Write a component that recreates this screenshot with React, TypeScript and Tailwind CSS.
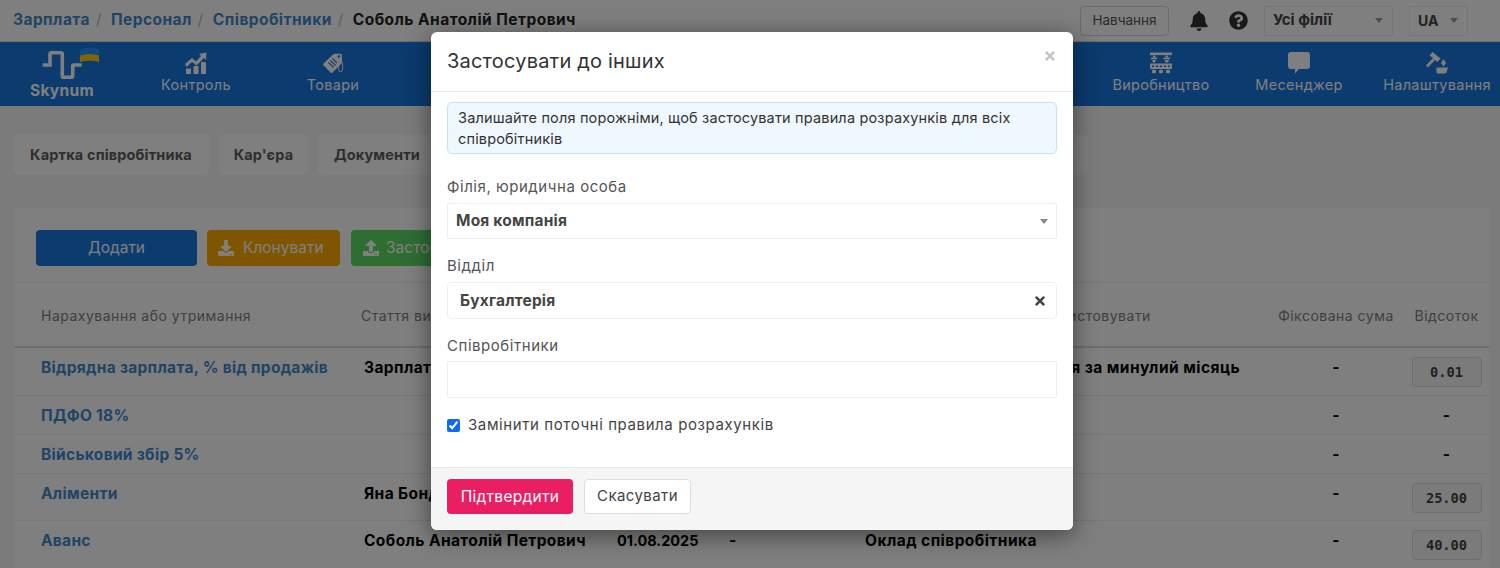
import React from 'react';
import { FaBell, FaQuestionCircle, FaDownload, FaUpload, FaTimes } from 'react-icons/fa';

const font = "font-['Inter','Liberation_Sans',sans-serif]";

const LogoMark = () => (
  <svg width="60" height="34" viewBox="0 0 60 34" className="block">
    <path
      d="M0.7 18 H8 V7 Q8 5.7 9.3 5.7 H19 Q20.3 5.7 20.3 7 V29 Q20.3 30.3 21.6 30.3 H29.4 Q30.7 30.3 30.7 29 V19.3 Q30.7 18 32 18 H39.7"
      fill="none"
      stroke="#fff"
      strokeWidth="3.6"
    />
    <path d="M38 2 Q48 -1 57 2 V8.5 Q48 5.5 38 8.5 Z" fill="#2090ff" />
    <path d="M38 8.5 Q48 5.5 57 8.5 V15 Q48 12 38 15 Z" fill="#ffcc00" />
  </svg>
);

const ChartIcon = () => (
  <svg width="22" height="22" viewBox="0 0 22 22" fill="#fff">
    <path d="M0 12 L7 6 L11 9.5 L16 4 L14 2 L21.5 0.5 L21 8 L19 6 L11.5 13.5 L7 10 L1.5 15 Z" />
    <rect x="1" y="16.5" width="5" height="5.5" rx="0.5" />
    <rect x="8.5" y="14" width="5" height="8" rx="0.5" />
    <rect x="16" y="10" width="5" height="12" rx="0.5" />
  </svg>
);

const TagIcon = () => (
  <svg width="21" height="21" viewBox="0 0 21 21">
    <path d="M0.5 10.5 L10 1.5 Q11 0.7 12.5 0.7 H17 Q19 0.7 19 2.7 V8.5 Q19 10 18 11 L9.5 19.5 Q8.5 20.5 7.5 19.5 L0.5 12.2 Q0 11.2 0.5 10.5 Z" fill="#fff" />
    <path d="M5.5 9.5 L10.5 14.5 M7.5 7.5 L12.5 12.5 M9.5 5.5 L14 10" stroke="#1676df" strokeWidth="1.1" />
    <circle cx="16" cy="3.7" r="1.4" fill="#1676df" />
    <path d="M16.5 4 Q20.5 9 19.5 17 Q18.5 20 16.5 18.5 Q15 17 15.5 13" fill="none" stroke="#fff" strokeWidth="0.9" />
  </svg>
);

const FactoryIcon = () => (
  <svg width="22" height="22" viewBox="0 0 22 22" fill="#fff">
    <rect x="0" y="0.5" width="22" height="2.6" />
    <rect x="3" y="3.5" width="2.5" height="2" />
    <rect x="15.5" y="3.5" width="2.5" height="2" />
    <path d="M1 5.5 H7 V7.2 H1 Z M2 8 H6 L5 10.5 H3 Z" />
    <path d="M13.5 5.5 H20 V7.2 H13.5 Z M14.5 8 H19 L18 10.5 H15.5 Z" />
    <path fillRule="evenodd" d="M1 11.5 H21 Q22 11.5 22 12.5 V16 Q22 17 21 17 H1 Q0 17 0 16 V12.5 Q0 11.5 1 11.5 Z M2 13.5 V15 H4 V13.5 Z M6 13.5 V15 H8 V13.5 Z M10 13.5 V15 H12 V13.5 Z M14 13.5 V15 H16 V13.5 Z M18 13.5 V15 H20 V13.5 Z" />
    <rect x="2" y="17.8" width="4" height="3.4" rx="1" />
    <rect x="9" y="17.8" width="4" height="3.4" rx="1" />
    <rect x="16" y="17.8" width="4" height="3.4" rx="1" />
  </svg>
);

const ChatIcon = () => (
  <svg width="22" height="22" viewBox="0 0 22 22" fill="#fff">
    <path d="M3 0 H19 Q22 0 22 3 V14 Q22 17 19 17 H11 L7 21.5 V17 H3 Q0 17 0 14 V3 Q0 0 3 0 Z" />
  </svg>
);

const HammerIcon = () => (
  <svg width="22" height="22" viewBox="0 0 22 22" fill="#fff">
    <path d="M6.5 0 L14.5 6.5 L11.5 10 L9 8 L2 15.5 L0 13.5 L7 6 L3.5 3.5 Z" />
    <path d="M17.5 7 L20 11 L17.5 14.5 L15 11 Z" />
    <path d="M10.5 15.5 H22 L20.5 20.5 Q20 21.5 19 21.5 H12 Q10.5 21.5 10.5 20 Z" />
  </svg>
);

const NavItem: React.FC<{ label: string; width: string; children: React.ReactNode }> = ({ label, width, children }) => (
  <div className={`${width} h-full flex flex-col items-center pt-[10px] text-white`}>
    <div className="h-[22px] flex items-center">{children}</div>
    <span className="text-[14.5px] leading-[20px] mt-[1px] tracking-[0.3px] whitespace-nowrap">{label}</span>
  </div>
);

const rows = [
  { name: 'Відрядна зарплата, % від продажів', item: 'Зарплата менеджерів', date: '', dash: '', base: 'Виручка від замовлення за минулий місяць', basePad: 'pl-[24px]', pct: '0.01', h: 'h-[48px]' },
  { name: 'ПДФО 18%', item: '', date: '', dash: '', base: '', basePad: 'pl-[10px]', pct: '-', h: 'h-[39px]' },
  { name: 'Військовий збір 5%', item: '', date: '', dash: '', base: '', basePad: 'pl-[10px]', pct: '-', h: 'h-[39px]' },
  { name: 'Аліменти', item: 'Яна Бонда', date: '', dash: '', base: '', basePad: 'pl-[10px]', pct: '25.00', h: 'h-[47px]' },
  { name: 'Аванс', item: 'Соболь Анатолій Петрович', date: '01.08.2025', dash: '-', base: 'Оклад співробітника', basePad: 'pl-[10px]', pct: '40.00', h: 'h-[48px]' },
];

const gridCols = 'grid-cols-[340px_253px_112px_136px_413px_136px_85px]';

export default function App() {
  return (
    <div className={`${font} relative h-[568px] w-[1500px] overflow-hidden bg-[#f6f6f6]`}>
      {/* Page behind the dialog */}
      <header className="h-[42px] bg-white border-b border-[#ddd] flex items-center pl-[13px] pr-[32px]">
        <nav className="flex items-center gap-[6px] text-[15.5px] font-bold tracking-[0.45px] -mt-[1px]">
          <a className="text-[#3f88cc]">Зарплата</a>
          <span className="text-[#bbb] font-normal">/</span>
          <a className="text-[#3f88cc] ml-[3px]">Персонал</a>
          <span className="text-[#bbb] font-normal">/</span>
          <a className="text-[#3f88cc] ml-[3px]">Співробітники</a>
          <span className="text-[#bbb] font-normal">/</span>
          <span className="text-[#222] ml-[3px]">Соболь Анатолій Петрович</span>
        </nav>
        <div className="ml-auto flex items-center">
          <button className="w-[89px] h-[30px] border border-[#d8d8d8] rounded-[4px] text-[13.5px] text-[#555]">Навчання</button>
          <FaBell className="ml-[20px] text-[#333]" size={20} />
          <FaQuestionCircle className="ml-[20px] text-[#333]" size={19} />
          <div className="ml-[16px] w-[129px] h-[30px] border border-[#eee] flex items-center justify-between pl-[8px] pr-[9px] text-[15px] font-bold text-[#444]">
            Усі філії
            <span className="w-0 h-0 border-x-[4px] border-x-transparent border-t-[5px] border-t-[#999]" />
          </div>
          <div className="ml-[16px] w-[59px] h-[30px] border border-[#eee] flex items-center justify-between pl-[8px] pr-[9px] text-[14px] font-bold text-[#444]">
            UA
            <span className="w-0 h-0 border-x-[4px] border-x-transparent border-t-[5px] border-t-[#999]" />
          </div>
        </div>
      </header>

      <div className="h-[64px] bg-[#1676df] flex items-start">
        <div className="w-[127px] h-full flex flex-col items-start pl-[30px] pt-[5px]">
          <div className="ml-[12px]">
            <LogoMark />
          </div>
          <span className="text-[15.5px] font-bold text-white leading-[18px] mt-[1px] tracking-[0.3px]">Skynum</span>
        </div>
        <NavItem label="Контроль" width="w-[138px]"><ChartIcon /></NavItem>
        <NavItem label="Товари" width="w-[136px]"><TagIcon /></NavItem>
        <div className="flex-1" />
        <NavItem label="Виробництво" width="w-[126px]"><FactoryIcon /></NavItem>
        <NavItem label="Месенджер" width="w-[150px]"><ChatIcon /></NavItem>
        <NavItem label="Налаштування" width="w-[126px]"><HammerIcon /></NavItem>
      </div>

      <div className="flex gap-[10px] pt-[28px] pl-[13px] text-[14.5px] tracking-[0.15px] font-bold text-[#5c5c5c]">
        <div className="w-[196px] h-[41px] rounded-[6px] bg-white flex items-center justify-center">Картка співробітника</div>
        <div className="w-[89px] h-[41px] rounded-[6px] bg-white flex items-center justify-center">Кар'єра</div>
        <div className="w-[118px] h-[41px] rounded-[6px] bg-white flex items-center justify-center">Документи</div>
        <div className="w-[642px] h-[41px] rounded-[6px] bg-white" />
      </div>

      <section className="mt-[33px] ml-[14px] w-[1475px] bg-white">
        <div className="h-[75px] border-b border-[#eee] flex items-start gap-[10px] pt-[22px] pl-[22px] text-[15.5px]">
          <button className="w-[161px] h-[36px] rounded-[4px] bg-[#1676df] text-white">Додати</button>
          <button className="w-[133px] h-[36px] rounded-[4px] bg-[#ffaa00] text-white flex items-center pl-[11px] gap-[9px]">
            <FaDownload size={16} /> Клонувати
          </button>
          <button className="ml-[1px] w-[150px] h-[36px] rounded-[4px] bg-[#5fdc66] text-white flex items-center pl-[12px] gap-[7px]">
            <FaUpload size={16} /> Застосувати
          </button>
        </div>
        <div className={`grid ${gridCols} h-[65px] border-b-2 border-[#ddd] pt-[22px] text-[14px] tracking-[0.5px] text-[#7e7e7e] whitespace-nowrap`}>
          <div className="pl-[27px]">Нарахування або утримання</div>
          <div className="pl-[7px]">Стаття витрат</div>
          <div />
          <div />
          <div className="pl-[143px]">Що використовувати</div>
          <div className="text-center">Фіксована сума</div>
          <div className="text-center">Відсоток</div>
        </div>
        {rows.map((r) => (
          <div key={r.name} className={`grid ${gridCols} ${r.h} border-b border-[#eee] pt-[8px] text-[15.5px] tracking-[0.3px] font-bold text-black whitespace-nowrap`}>
            <a className="pl-[27px] text-[#3f88cc]">{r.name}</a>
            <div className="pl-[10px] tracking-[0.4px]">{r.item}</div>
            <div className="pl-[10px] text-[14.5px] tracking-[0px] leading-[24px]">{r.date}</div>
            <div className="pl-[10px]">{r.dash}</div>
            <div className={`${r.basePad} tracking-[0.45px]`}>{r.base}</div>
            <div className="text-center">-</div>
            <div className="flex justify-center">
              {r.pct === '-' ? (
                <span>-</span>
              ) : (
                <span className="mt-[1px] w-[70px] h-[30px] border border-[#ddd] rounded-[4px] bg-[#f7f7f7] flex items-center justify-center font-['DejaVu_Sans_Mono',monospace] text-[13.7px] tracking-[0px] text-[#444]">
                  {r.pct}
                </span>
              )}
            </div>
          </div>
        ))}
      </section>

      {/* Backdrop */}
      <div className="absolute inset-0 bg-black/50" />

      {/* Dialog */}
      <div className="absolute left-[431px] top-[32px] w-[642px] h-[498px] bg-white rounded-[6px] shadow-[0_5px_25px_rgba(0,0,0,0.5)] flex flex-col text-[#444]">
        <div className="h-[60px] border-b border-[#e8e8e8] flex items-center justify-between pl-[16px] pr-[16px] shrink-0">
          <h4 className="text-[20px] tracking-[0.2px] text-[#333] -mt-[2px]">Застосувати до інших</h4>
          <FaTimes className="text-[#c4c4c4] -mt-[11px]" size={14} />
        </div>
        <div className="flex-1 px-[16px] pt-[10px]">
          <div className="h-[52px] rounded-[5px] border border-[#bde5fd] bg-[#eff8ff] px-[10px] pt-[5px] text-[14.5px] leading-[20.5px] tracking-[0.17px] text-[#333]">
            Залишайте поля порожніми, щоб застосувати правила розрахунків для всіх співробітників
          </div>
          <label className="block mt-[23px] text-[15px] leading-[20px] tracking-[0.55px] text-[#555]">Філія, юридична особа</label>
          <div className="mt-[6px] h-[36px] border border-[#eee] rounded-[2px] flex items-center justify-between pl-[8px] pr-[8px] text-[15.5px] font-bold tracking-[0.2px] text-[#444]">
            Моя компанія
            <span className="w-0 h-0 border-x-[4px] border-x-transparent border-t-[5px] border-t-[#888]" />
          </div>
          <label className="block mt-[17px] text-[15px] leading-[20px] tracking-[0.55px] text-[#555]">Відділ</label>
          <div className="mt-[6px] h-[37px] border border-[#eee] rounded-[4px] flex items-center justify-between pl-[12px] pr-[9px] text-[15.5px] font-bold tracking-[0.2px] text-[#444]">
            Бухгалтерія
            <FaTimes className="text-[#444]" size={14} />
          </div>
          <label className="block mt-[17px] text-[15px] leading-[20px] tracking-[0.55px] text-[#555]">Співробітники</label>
          <div className="mt-[5px] h-[37px] border border-[#eee] rounded-[2px]" />
          <label className="mt-[17px] flex items-center gap-[8px] text-[15px] leading-[20px] tracking-[0.6px] text-[#444]">
            <input type="checkbox" defaultChecked className="w-[13px] h-[13px] accent-[#0a6cf5]" />
            Замінити поточні правила розрахунків
          </label>
        </div>
        <div className="h-[63px] shrink-0 border-t border-[#e8e8e8] bg-[#f5f5f5] rounded-b-[6px] flex items-start gap-[11px] pl-[16px] pt-[11px]">
          <button className="w-[126px] h-[35px] rounded-[4px] bg-[#e91e63] text-white text-[15.5px] tracking-[0.3px]">Підтвердити</button>
          <button className="w-[107px] h-[35px] rounded-[4px] bg-white border border-[#ddd] text-[#444] text-[15px] tracking-[0.4px]">Скасувати</button>
        </div>
      </div>
    </div>
  );
}
